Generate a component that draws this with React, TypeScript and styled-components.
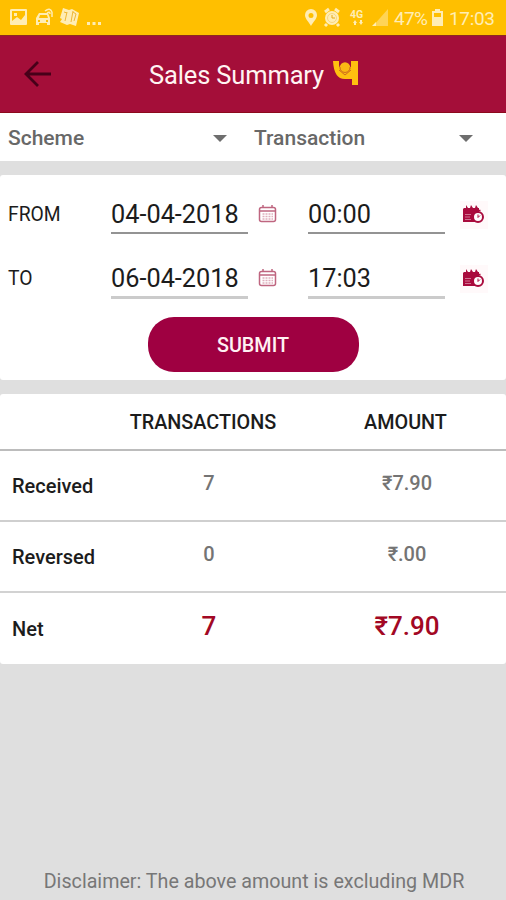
import React from "react";
import styled, { createGlobalStyle } from "styled-components";

const GlobalStyle = createGlobalStyle`
  * { box-sizing: border-box; }
  body { margin: 0; background: #dfdfdf; font-family: Roboto, sans-serif; }
`;

const Screen = styled.main`
  width: 506px;
  height: 900px;
  display: flex;
  flex-direction: column;
  background: #dfdfdf;
  overflow: hidden;
`;

const StatusBar = styled.div`
  height: 35px;
  flex: none;
  display: flex;
  justify-content: space-between;
  background: #ffbf00;
  color: #ffedb4;
`;

const Header = styled.header`
  height: 78px;
  flex: none;
  display: grid;
  grid-template-columns: 149px 183px 1fr;
  background: #a40e39;
  border-top: 1px solid #8d2a20;
  border-bottom: 1px solid #8c0a1c;
`;

const BackButton = styled.button`
  display: flex;
  align-items: center;
  padding: 0 0 2px 23px;
  border: 0;
  background: none;
`;

const Label = styled.span<{
  $size: number;
  $weight?: number;
  $color?: string;
}>`
  font-size: ${(p) => p.$size}px;
  font-weight: ${(p) => p.$weight ?? 400};
  color: ${(p) => p.$color ?? "#1c1c1c"};
  line-height: 1.2;
  white-space: nowrap;
`;

const Title = styled.h1`
  margin: 0;
  font-size: 25.5px;
  font-weight: 400;
  line-height: 78px;
  letter-spacing: -0.15px;
  color: #fff4f2;
  white-space: nowrap;
`;

const BrandMark = styled.svg`
  display: block;
  width: 28px;
  height: 28px;
  margin-top: 24px;
`;

const Filters = styled.section`
  height: 48px;
  flex: none;
  display: grid;
  grid-template-columns: 246px 246px;
  background: #fff;
`;

const Select = styled.div`
  display: flex;
  align-items: center;
  justify-content: space-between;
  padding: 3px 19px 0 8px;
`;

const Card = styled.section<{ $height: number }>`
  height: ${(p) => p.$height}px;
  flex: none;
  margin-top: 14px;
  background: #fff;
  border-radius: 3px;
`;

const FormCard = styled(Card)`
  padding-top: 15px;
  display: flex;
  flex-direction: column;
  align-items: center;
`;

const RangeRow = styled.div`
  width: 506px;
  height: 64px;
  display: grid;
  grid-template-columns: 103px 137px 60px 137px 1fr;
  align-items: start;
  padding-left: 8px;
`;

const RowLabel = styled.div`
  height: 50px;
  display: flex;
  align-items: center;
`;

const Field = styled.div<{ $soft?: boolean }>`
  height: ${(p) => (p.$soft ? 45 : 44)}px;
  border-bottom: ${(p) => (p.$soft ? "3px solid #cbcbcb" : "2px solid #939393")};
  padding-top: 10px;
`;

const IconCell = styled.div<{ $left: number }>`
  height: 50px;
  display: flex;
  align-items: center;
  padding-left: ${(p) => p.$left}px;
`;

const Submit = styled.button`
  width: 211px;
  height: 55px;
  margin-top: -1px;
  border: 0;
  border-radius: 26px;
  background: #9f0041;
  color: #fff1f3;
  font: 500 19.8px/55px Roboto, sans-serif;
  padding: 1px 0 0;
`;

const TableRow = styled.div<{ $height: number; $line?: string }>`
  height: ${(p) => p.$height}px;
  display: grid;
  grid-template-columns: 108px 202px 194px;
  align-items: center;
  border-bottom: ${(p) => (p.$line ? `2px solid ${p.$line}` : "0")};
`;

const HeadRow = styled(TableRow)`
  grid-template-columns: 108px 190px 215px;
  padding-top: 2px;
`;

const NameCell = styled.div`
  padding: 1px 0 0 12px;
`;

const ValueCell = styled.div<{ $raised?: number }>`
  padding-bottom: ${(p) => p.$raised ?? 0}px;
  text-align: center;
`;

const Disclaimer = styled.footer`
  margin-top: auto;
  padding: 0 0 6px 2px;
  text-align: center;
`;

const StatusIcons = () => (
  <svg width="110" height="35" fill="#ffedb4">
    <path fillRule="evenodd" d="M12 9h14q1 0 1 1v14q0 1-1 1H11q-1 0-1-1V10q0-1 2-1ZM12 11v10l5-4 4 3 4-5v-4ZM14 13h3v3h-3Z" />
    <path fillRule="evenodd" d="M39 13h9l2 5v7h-3v-2h-8v2h-3v-7ZM40 15l-1 3h9l-1-3ZM38 20v2h2v-2Zm8 0v2h2v-2Z" />
    <path d="M45 11q5-4 7 1M47 13q3-2 3 1M52 12v5" fill="none" stroke="#ffedb4" strokeWidth="1.5" />
    <path d="m63 8 6 2 3-1 7 4-3 13-6-2-3 1-7-3 2-3-2-1Z" />
    <path d="m67 12-2 9m8-10-2 11M64 12l3 1m6-1 3 2-2 7" fill="none" stroke="#efb634" strokeWidth="1" />
    <path d="M87 22h3v3h-3Zm5.500 0h3v3h-3Zm5.500 0h3v3h-3Z" />
  </svg>
);

const SystemStatus = () => (
  <svg width="206" height="35" fill="#ffedb4">
    <path fillRule="evenodd" d="M11 9a6 6 0 0 1 6 6c0 4-4 7-6 11-2-4-6-7-6-11a6 6 0 0 1 6-6Zm0 4a2.500 2.500 0 1 0 0 5 2.500 2.500 0 0 0 0-5Z" />
    <circle cx="32" cy="18" r="7" />
    <path d="m25 12 4-3m6 0 4 3M27 24l-2 2m12-2 2 2" stroke="#ffedb4" strokeWidth="3" />
    <circle cx="32" cy="18" r="4.500" fill="none" stroke="#f6d580" />
    <path d="M32 15v3h3" fill="none" stroke="#e6a919" />
    <text x="50" y="18" fontFamily="Roboto" fontWeight="700" fontSize="10.500">4G</text>
    <path d="m55 20 2 3h-4Zm6 5-2-3h4ZM54 23h2v2h-2Zm6-3h2v2h-2Z" />
    <path d="M88 9v17H73Z" opacity=".48" />
    <path d="M76 22v4h-4Z" />
    <text x="94" y="25" fontFamily="Roboto" fontSize="19" textLength="34">47%</text>
    <path fillRule="evenodd" d="M135 9h5v2h3v15h-11V11h3Zm-1 4v4h7v-4Z" />
    <text x="149" y="25" fontFamily="Roboto" fontSize="19" textLength="46">17:03</text>
  </svg>
);

const Arrow = () => (
  <svg width="30" height="30" fill="none" stroke="#470019" strokeWidth="2.800">
    <path d="M28 15H3M15 3 3 15l12 12" />
  </svg>
);

const Caret = () => (
  <svg width="14" height="8" fill="#6e6e6e">
    <path d="M0 0h14L7 7Z" />
  </svg>
);

const CalendarIcon = () => (
  <svg width="20" height="20" fill="none" stroke="#bf6680">
    <rect x="1.500" y="2.500" width="16" height="14" rx="2" strokeWidth="1.500" />
    <path d="M2 6h15M5 0v3m9-3v3" strokeWidth="1.500" />
    <path d="M4.500 9h10.500M4.500 11.500h10.500M4.500 14h10.500" stroke="#dfafbd" strokeWidth="1.300" strokeDasharray="2 1" />
  </svg>
);

const ScheduleIcon = () => (
  <svg width="28" height="28">
    <path d="M0 0h28v28H0Z" fill="#fff9fa" />
    <path d="M3 8l1-1h2V4l2 3h2l1-3 2 3h2l1-3 2 3h1v4H3ZM3 11h15v10H3Z" fill="#a90b3d" />
    <path d="M5 13.500h6m-6 2.500h5M5 18.500h6" stroke="#cf7290" strokeWidth="1" />
    <circle cx="18" cy="16" r="5" fill="#fff" stroke="#a90b3d" strokeWidth="2" />
    <path d="M18 13.500v3l2-2" fill="none" stroke="#a90b3d" strokeWidth="1" />
    <path d="M16.500 9.500h4" stroke="#a90b3d" strokeWidth="1.500" />
  </svg>
);

const ranges = [
  { name: "FROM", date: "04-04-2018", time: "00:00", soft: false },
  { name: "TO", date: "06-04-2018", time: "17:03", soft: true },
];

const totals = [
  { name: "Received", count: "7", amount: "₹7.90", height: 71, line: "#cfcfcf", net: false },
  { name: "Reversed", count: "0", amount: "₹.00", height: 71, line: "#d2d2d2", net: false },
  { name: "Net", count: "7", amount: "₹7.90", height: 71, line: undefined, net: true },
];

export default function App() {
  return (
    <>
      <GlobalStyle />
      <Screen>
        <StatusBar>
          <StatusIcons />
          <SystemStatus />
        </StatusBar>
        <Header>
          <BackButton aria-label="Back"><Arrow /></BackButton>
          <Title>Sales Summary</Title>
          <BrandMark viewBox="0 0 28 28" aria-hidden="true">
            <path d="M1 1h6v4q1 7 6 9 5-2 6-8V1h7v24h-6v-6h-6Q2 20 1 1Z" fill="#ffc010" />
            <path d="M7 7h12q-1 5-6 8-5-3-6-8Z" fill="#fbb914" />
            <circle cx="13" cy="7.500" r="5.200" fill="#fbb914" />
            <path d="M8 7q0 5 5 5.500Q18 12 18 7M7 10l6 5 6-5" fill="none" stroke="#c9671d" strokeWidth=".9" />
          </BrandMark>
        </Header>
        <Filters>
          {["Scheme", "Transaction"].map((name) => (
            <Select key={name}>
              <Label $size={21} $weight={500} $color="#686868">{name}</Label>
              <Caret />
            </Select>
          ))}
        </Filters>
        <FormCard $height={205}>
          {ranges.map((r) => (
            <RangeRow key={r.name}>
              <RowLabel><Label $size={19.3}>{r.name}</Label></RowLabel>
              <Field $soft={r.soft}><Label $size={25.3}>{r.date}</Label></Field>
              <IconCell $left={10}><CalendarIcon /></IconCell>
              <Field $soft={r.soft}><Label $size={25.3}>{r.time}</Label></Field>
              <IconCell $left={15}><ScheduleIcon /></IconCell>
            </RangeRow>
          ))}
          <Submit>SUBMIT</Submit>
        </FormCard>
        <Card $height={270}>
          <HeadRow $height={57} $line="#bcbcbc">
            <span />
            <ValueCell><Label $size={19.8} $weight={500}>TRANSACTIONS</Label></ValueCell>
            <ValueCell><Label $size={19.8} $weight={500}>AMOUNT</Label></ValueCell>
          </HeadRow>
          {totals.map((t) => (
            <TableRow key={t.name} $height={t.height} $line={t.line}>
              <NameCell><Label $size={20} $weight={500}>{t.name}</Label></NameCell>
              <ValueCell $raised={t.net ? 3 : 5}>
                <Label $size={t.net ? 26 : 20} $weight={500} $color={t.net ? "#a20824" : "#747474"}>{t.count}</Label>
              </ValueCell>
              <ValueCell $raised={t.net ? 3 : 5}>
                <Label $size={t.net ? 26 : 20} $weight={500} $color={t.net ? "#a20824" : "#747474"}>{t.amount}</Label>
              </ValueCell>
            </TableRow>
          ))}
        </Card>
        <Disclaimer>
          <Label $size={19.7} $color="#777">Disclaimer: The above amount is excluding MDR</Label>
        </Disclaimer>
      </Screen>
    </>
  );
}
